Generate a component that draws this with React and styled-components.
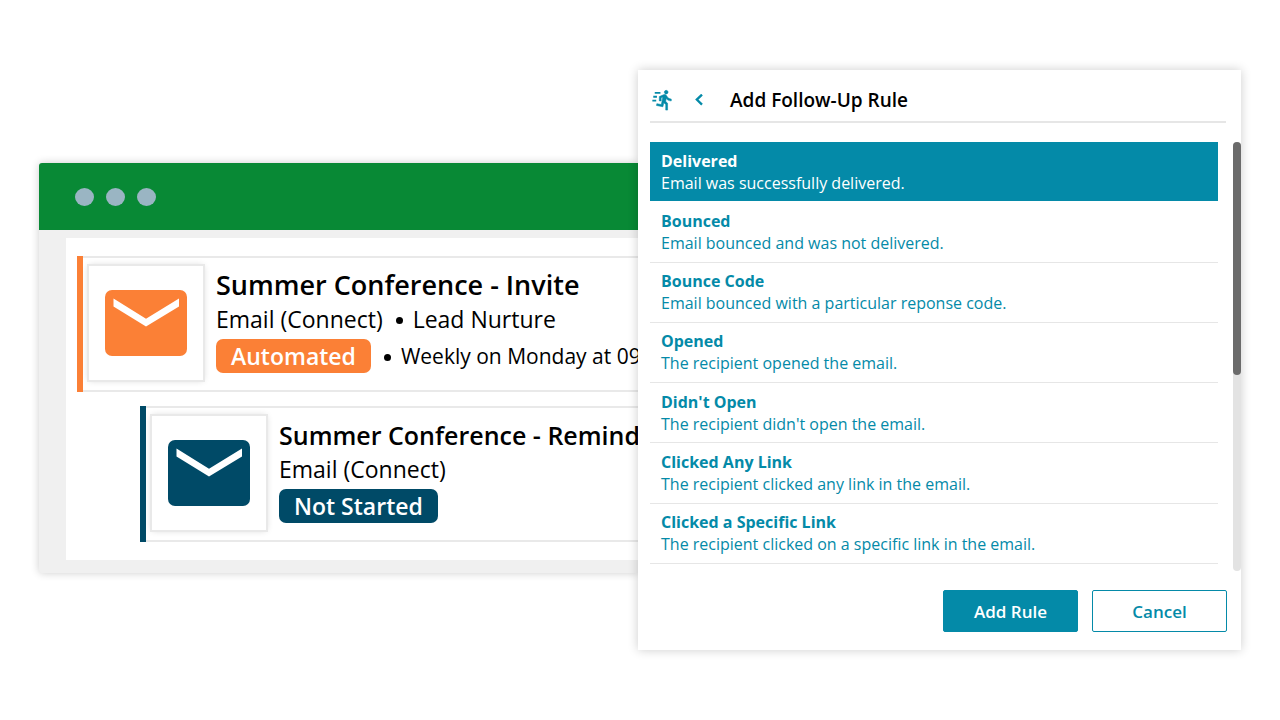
import React, { useState } from "react";
import styled, { createGlobalStyle } from "styled-components";

const rules = [
  { name: "Delivered", text: "Email was successfully delivered." },
  { name: "Bounced", text: "Email bounced and was not delivered." },
  { name: "Bounce Code", text: "Email bounced with a particular reponse code." },
  { name: "Opened", text: "The recipient opened the email." },
  { name: "Didn't Open", text: "The recipient didn't open the email." },
  { name: "Clicked Any Link", text: "The recipient clicked any link in the email." },
  { name: "Clicked a Specific Link", text: "The recipient clicked on a specific link in the email." },
];

const orange = "#fb8036";
const navy = "#004a67";

const EnvelopeIcon = () => (
  <svg width="82" height="66" viewBox="0 0 82 66" aria-hidden="true">
    <rect width="82" height="66" rx="7" fill="currentColor" />
    <path d="M8.5 8.5 L41 28.8 L74 8.5 V16.5 L41 36.6 L8.5 16.5 Z" fill="#fff" />
  </svg>
);

//runner with three speed lines
const RunnerIcon = () => (
  <svg width="22" height="22" viewBox="0 0 24 24" fill="currentColor" aria-hidden="true">
    <path
      transform="translate(2 0)"
      stroke="currentColor"
      strokeWidth="0.6"
      d="M13.49 5.48c1.1 0 2-.9 2-2s-.9-2-2-2-2 .9-2 2 .9 2 2 2zm-3.6 13.9l1-4.4 2.1 2v6h2v-7.5l-2.1-2 .6-3c1.3 1.5 3.3 2.5 5.5 2.5v-2c-1.9 0-3.5-1-4.3-2.4l-1-1.6c-.4-.6-1-1-1.7-1-.3 0-.5.1-.8.1l-5.2 2.2v4.7h2v-3.4l1.8-.7-1.6 8.1-4.9-1-.4 2 7 1.4z"
    />
    <path d="M3 3.2h6.2v2.1H3zM1.4 7.4h4v2.1h-4zM0.4 11.6h4.2v1.9H0.4z" />
  </svg>
);

const ChevronIcon = () => (
  <svg width="8" height="12" viewBox="0 0 8 12" fill="none" stroke="currentColor" strokeWidth="2.3" aria-hidden="true">
    <path d="M7 0.6 L1.8 5.6 L7 10.6" />
  </svg>
);

const EmailCard = ({ color, title, small, indent, status, type, schedule }) => (
  <Card $color={color} $indent={indent}>
    <Tile $color={color}>
      <EnvelopeIcon />
    </Tile>
    <Details>
      <CardTitle $small={small}>{title}</CardTitle>
      <Line>
        Email (Connect)
        {type && <Dot />}
        {type}
      </Line>
      <StatusLine>
        <Badge $color={color}>{status}</Badge>
        {schedule && <Dot />}
        {schedule}
      </StatusLine>
    </Details>
  </Card>
);

const App = () => {
  const [selected, setSelected] = useState("Delivered");

  return (
    <Page>
      <GlobalStyle />
      <Window>
        <TitleBar>
          <WindowDot />
          <WindowDot />
          <WindowDot />
        </TitleBar>
        <WindowBody>
          <Cards>
            <EmailCard
              color={orange}
              title="Summer Conference - Invite"
              status="Automated"
              type="Lead Nurture"
              schedule="Weekly on Monday at 09"
            />
            <EmailCard color={navy} title="Summer Conference - Remind" status="Not Started" small indent />
          </Cards>
        </WindowBody>
      </Window>

      <Dialog role="dialog" aria-labelledby="rule-title">
        <DialogHeader>
          <RunnerIcon />
          <BackButton type="button" aria-label="Back">
            <ChevronIcon />
          </BackButton>
          <DialogTitle id="rule-title">Add Follow-Up Rule</DialogTitle>
        </DialogHeader>
        <ListArea>
          <RuleList>
            {rules.map((rule) => (
              <RuleButton
                key={rule.name}
                type="button"
                aria-pressed={selected === rule.name}
                $active={selected === rule.name}
                onClick={() => setSelected(rule.name)}
              >
                <strong>{rule.name}</strong>
                <span>{rule.text}</span>
              </RuleButton>
            ))}
          </RuleList>
          <ScrollTrack>
            <ScrollThumb />
          </ScrollTrack>
        </ListArea>
        <DialogFooter>
          <Button type="button" $primary>Add Rule</Button>
          <Button type="button">Cancel</Button>
        </DialogFooter>
      </Dialog>
    </Page>
  );
};

const GlobalStyle = createGlobalStyle`
  * {
    box-sizing: border-box;
  }
  body {
    margin: 0;
    background: #fff;
    color: #000;
    font-family: "Open Sans", "Noto Sans", sans-serif;
  }
  button {
    font-family: inherit;
    cursor: pointer;
  }
`;

const Page = styled.main`
  display: flex;
  align-items: flex-start;
  min-height: 100vh;
  padding: 70px 39px;
`;

const Window = styled.section`
  flex: 1;
  min-width: 0;
  margin-top: 93px;
  overflow: hidden;
  border-radius: 3px 0 0 3px;
  background: #f0f0f0;
  box-shadow: 0 0 8px rgba(0, 0, 0, 0.2);
`;

const TitleBar = styled.div`
  display: flex;
  align-items: center;
  gap: 12px;
  height: 67px;
  padding-left: 36px;
  background: #088935;
`;

const WindowDot = styled.span`
  width: 19px;
  height: 18px;
  border-radius: 50%;
  background: #9ab5c3;
`;

const WindowBody = styled.div`
  padding: 8px 0 13px 27px;
`;

const Cards = styled.div`
  display: flex;
  flex-direction: column;
  gap: 14px;
  padding: 18px 0 18px 11px;
  background: #fff;
`;

const Card = styled.article`
  display: flex;
  align-items: flex-start;
  gap: 13px;
  height: 136px;
  margin-left: ${({ $indent }) => ($indent ? "63px" : "0")};
  padding: 10px 0 0 12px;
  box-shadow: inset 6px 0 ${({ $color }) => $color}, inset 0 2px #e9e9e9, inset 0 -2px #e9e9e9;
  white-space: nowrap;
`;

const Tile = styled.div`
  display: flex;
  align-items: center;
  justify-content: center;
  flex-shrink: 0;
  width: 114px;
  height: 114px;
  background: #fff;
  color: ${({ $color }) => $color};
  box-shadow: 0 0 0 2px #e9e9e9, 0 0 7px rgba(0, 0, 0, 0.2);
`;

const Details = styled.div`
  display: flex;
  flex-direction: column;
`;

const CardTitle = styled.h2`
  margin: 0;
  font-size: ${({ $small }) => ($small ? "25px" : "27px")};
  font-weight: 600;
  line-height: 38px;
`;

const Line = styled.div`
  display: flex;
  align-items: center;
  font-size: 23px;
  line-height: 30px;
`;

const StatusLine = styled(Line)`
  margin-top: 5px;
  font-size: 21px;
  line-height: 34px;
`;

const Dot = styled.span`
  width: 7px;
  height: 7px;
  margin: 2px 10px 0 13px;
  border-radius: 50%;
  background: #000;
`;

const Badge = styled.span`
  padding: 0 15px;
  border-radius: 7px;
  background: ${({ $color }) => $color};
  color: #fff;
  font-size: 23px;
  font-weight: 600;
`;

const Dialog = styled.section`
  flex: 0 0 603px;
  z-index: 1;
  padding: 0 0 18px 12px;
  background: #fff;
  box-shadow: 0 0 10px rgba(0, 0, 0, 0.2);
`;

const DialogHeader = styled.header`
  display: flex;
  align-items: center;
  height: 53px;
  margin: 0 15px 19px 0;
  padding: 8px 0 0 2px;
  border-bottom: 2px solid #e6e6e6;
  color: #048aa8;
`;

const BackButton = styled.button`
  display: flex;
  margin: 0 17px 0 11px;
  padding: 8px 10px;
  border: none;
  background: none;
  color: inherit;
`;

const DialogTitle = styled.h1`
  margin: 0;
  color: #000;
  font-size: 19px;
  font-weight: 600;
`;

const ListArea = styled.div`
  display: grid;
  grid-template-columns: 1fr 8px;
  gap: 15px;
  height: 429px;
`;

const RuleList = styled.div`
  display: grid;
  grid-auto-rows: 1fr;
  height: 422px;
`;

const RuleButton = styled.button`
  display: flex;
  flex-direction: column;
  justify-content: center;
  padding: 0 11px;
  border: none;
  border-bottom: 1px solid ${({ $active }) => ($active ? "#fff" : "#e6e6e6")};
  background: ${({ $active }) => ($active ? "#048aa8" : "#fff")};
  background-clip: padding-box;
  color: ${({ $active }) => ($active ? "#fff" : "#048aa8")};
  font-size: 16px;
  line-height: 22px;
  text-align: left;
`;

const ScrollTrack = styled.div`
  border-radius: 4px;
  background: #e3e3e3;
`;

const ScrollThumb = styled.div`
  height: 233px;
  border-radius: 4px;
  background: #6b6b6b;
`;

const DialogFooter = styled.footer`
  display: flex;
  justify-content: flex-end;
  gap: 14px;
  margin: 19px 14px 0 0;
`;

const Button = styled.button`
  width: 135px;
  height: 42px;
  border: 1px solid #048aa8;
  border-radius: 2px;
  background: ${({ $primary }) => ($primary ? "#048aa8" : "#fff")};
  color: ${({ $primary }) => ($primary ? "#fff" : "#048aa8")};
  font-size: 17px;
  font-weight: 600;
`;

export default App;
